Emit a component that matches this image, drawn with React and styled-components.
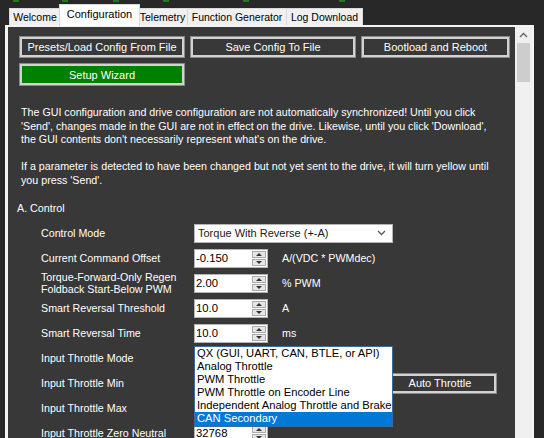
import React from 'react';
import styled, { createGlobalStyle } from 'styled-components';

const GlobalStyle = createGlobalStyle`
  html, body {
    margin: 0;
    padding: 0;
    background: #282828;
    overflow: hidden;
  }
  body {
    font-family: "Liberation Sans", Arial, sans-serif;
    font-size: 10.7px;
  }
  * { box-sizing: border-box; }
`;

const Window = styled.div`
  width: 544px;
  height: 438px;
  display: flex;
  flex-direction: column;
  overflow: hidden;
`;

const LedStrip = styled.div`
  height: 4px;
  display: flex;
  align-items: flex-start;
`;

const Led = styled.span`
  width: 6px;
  height: 2px;
  background: #1d7a1d;
  margin-left: ${p => p.$gap}px;
`;

const TabBar = styled.div`
  height: 21px;
  display: flex;
  align-items: flex-end;
  padding-left: 9px;
`;

const Tab = styled.div`
  position: relative;
  width: ${p => p.$w}px;
  height: ${p => (p.$active ? 22 : 17)}px;
  margin: ${p => (p.$active ? '0 -2px -1px -2px' : '0')};
  padding-top: ${p => (p.$active ? 3 : 2)}px;
  text-align: center;
  background: ${p => (p.$active ? '#ffffff' : '#f0f0f0')};
  border: 1px solid #d9d9d9;
  border-bottom: none;
  border-left: ${p => (p.$active ? '1px solid #d9d9d9' : 'none')};
  z-index: ${p => (p.$active ? 2 : 1)};
  color: #000;
  font-size: ${p => (p.$active ? 11 : 10.5)}px;
  white-space: nowrap;
  &:first-child {
    border-left: 1px solid #d9d9d9;
  }
`;

const Page = styled.div`
  flex: 1;
  min-height: 0;
  margin: 0 10px 0 5px;
  border: 3px solid #f4f4f4;
  border-top-width: 2px;
  border-right-width: 2px;
  border-bottom: none;
  display: flex;
`;

const Content = styled.div`
  flex: 1;
  background: #383838;
  color: #ffffff;
  padding: 10px 0 0 12px;
  overflow: hidden;
`;

const ButtonRow = styled.div`
  display: flex;
  gap: 7px;
`;

const Button = styled.button`
  width: ${p => p.$w || 164}px;
  height: ${p => p.$h || 20}px;
  background: ${p => (p.$green ? '#008000' : '#383838')};
  border: 2px solid #d2d2d2;
  box-shadow: 0 0 0 1px #8a8a8a;
  color: #ffffff;
  font-family: "Liberation Sans", Arial, sans-serif;
  font-size: 11px;
  padding: 0;
  margin-left: ${p => p.$ml || 0}px;
  white-space: nowrap;
  cursor: pointer;
`;

const WizardRow = styled.div`
  margin-top: 7px;
`;

const Notice = styled.div`
  margin-top: 21px;
  padding-left: 1px;
  line-height: 13.5px;
  p {
    margin: 0 0 13.5px 0;
  }
`;

const SectionTitle = styled.div`
  margin: 13px 0 6px -3px;
  line-height: 14px;
`;

const Row = styled.div`
  display: grid;
  grid-template-columns: 153px auto 1fr;
  align-items: center;
  height: 25px;
  padding-left: 21px;
`;

const Label = styled.div`
  line-height: 12px;
`;

const Unit = styled.div`
  margin-left: 14px;
  white-space: nowrap;
`;

const Combo = styled.div`
  width: 199px;
  height: 19px;
  background: #ffffff;
  border: 1px solid #b4b4b4;
  color: #1a1a1a;
  display: flex;
  align-items: center;
  justify-content: space-between;
  padding: 0 6px 0 3px;
  font-size: 11px;
`;

const SpinBox = styled.div`
  width: 74px;
  height: 19px;
  background: #ffffff;
  border: 1px solid #b4b4b4;
  display: flex;
  color: #000;
`;

const SpinValue = styled.div`
  flex: 1;
  padding-left: 1px;
  line-height: 16px;
  font-size: 11.3px;
`;

const SpinButtons = styled.div`
  width: 15px;
  display: flex;
  flex-direction: column;
  gap: 1px;
  padding: 1px 1px 1px 0;
`;

const SpinHalf = styled.div`
  flex: 1;
  background: #e5e5e5;
  border: 1px solid #acacac;
  display: flex;
  align-items: center;
  justify-content: center;
  &::after {
    content: '';
    border-left: 3px solid transparent;
    border-right: 3px solid transparent;
    ${p => (p.$down ? 'border-top: 3px solid #333;' : 'border-bottom: 3px solid #333;')}
  }
`;

const ListAnchor = styled.div`
  position: relative;
`;

const DropList = styled.div`
  position: absolute;
  top: -3px;
  left: 0;
  width: 199px;
  background: #ffffff;
  border: 1px solid #3d6a9c;
  z-index: 5;
`;

const DropItem = styled.div`
  height: 13.2px;
  line-height: 13.2px;
  padding-left: 2px;
  font-size: 11.2px;
  white-space: nowrap;
  overflow: hidden;
  background: ${p => (p.$selected ? '#0078d7' : '#ffffff')};
  color: ${p => (p.$selected ? '#ffffff' : '#000000')};
`;

const ScrollBar = styled.div`
  width: 17px;
  background: #f0f0f0;
  display: flex;
  flex-direction: column;
`;

const ScrollArrow = styled.div`
  height: 16px;
  display: flex;
  align-items: center;
  justify-content: center;
`;

const ScrollThumb = styled.div`
  height: 39px;
  margin: 0 2px;
  background: #cdcdcd;
`;

const Chevron = ({ up }) => (
  <svg width="9" height="6" viewBox="0 0 9 6">
    <path
      d={up ? 'M1 5 L4.5 1.5 L8 5' : 'M1 1 L4.5 4.5 L8 1'}
      fill="none"
      stroke={up ? '#606060' : '#555'}
      strokeWidth="1.3"
    />
  </svg>
);

// value is left out for the boxes the open list covers
const Spin = ({ value }) => (
  <SpinBox>
    <SpinValue>{value}</SpinValue>
    <SpinButtons>
      <SpinHalf />
      <SpinHalf $down />
    </SpinButtons>
  </SpinBox>
);

const throttleModes = [
  'QX (GUI, UART, CAN, BTLE, or API)',
  'Analog Throttle',
  'PWM Throttle',
  'PWM Throttle on Encoder Line',
  'Independent Analog Throttle and Brake',
  'CAN Secondary',
];

export default function App() {
  return (
    <Window>
      <GlobalStyle />
      <LedStrip>
        <Led $gap={13} />
        <Led $gap={43} />
        <Led $gap={45} />
        <Led $gap={44} />
        <Led $gap={74} />
        <Led $gap={90} />
      </LedStrip>
      <TabBar>
        <Tab $w={52}>Welcome</Tab>
        <Tab $w={81} $active>Configuration</Tab>
        <Tab $w={50}>Telemetry</Tab>
        <Tab $w={99}>Function Generator</Tab>
        <Tab $w={76}>Log Download</Tab>
      </TabBar>
      <Page>
        <Content>
          <ButtonRow>
            <Button>Presets/Load Config From File</Button>
            <Button>Save Config To File</Button>
            <Button $w={147}>Bootload and Reboot</Button>
          </ButtonRow>
          <WizardRow>
            <Button $green $h={21}>Setup Wizard</Button>
          </WizardRow>
          <Notice>
            <p>
              The GUI configuration and drive configuration are not automatically synchronized! Until you click
              <br />
              'Send', changes made in the GUI are not in effect on the drive. Likewise, until you click 'Download',
              <br />
              the GUI contents don't necessarily represent what's on the drive.
            </p>
            <p>
              If a parameter is detected to have been changed but not yet sent to the drive, it will turn yellow until
              <br />
              you press 'Send'.
            </p>
          </Notice>
          <SectionTitle>A. Control</SectionTitle>
          <Row>
            <Label>Control Mode</Label>
            <Combo>
              <span>Torque With Reverse (+-A)</span>
              <Chevron />
            </Combo>
          </Row>
          <Row>
            <Label>Current Command Offset</Label>
            <Spin value="-0.150" />
            <Unit>A/(VDC * PWMdec)</Unit>
          </Row>
          <Row>
            <Label>
              Torque-Forward-Only Regen
              <br />
              Foldback Start-Below PWM
            </Label>
            <Spin value="2.00" />
            <Unit>% PWM</Unit>
          </Row>
          <Row>
            <Label>Smart Reversal Threshold</Label>
            <Spin value="10.0" />
            <Unit>A</Unit>
          </Row>
          <Row>
            <Label>Smart Reversal Time</Label>
            <Spin value="10.0" />
            <Unit>ms</Unit>
          </Row>
          <Row>
            <Label>Input Throttle Mode</Label>
            <ListAnchor>
              <Combo>
                <span />
                <Chevron />
              </Combo>
              <DropList>
                {throttleModes.map(m => (
                  <DropItem key={m} $selected={m === 'CAN Secondary'}>
                    {m}
                  </DropItem>
                ))}
              </DropList>
            </ListAnchor>
          </Row>
          <Row>
            <Label>Input Throttle Min</Label>
            <Spin />
            <div>
              <Button $w={112} $h={19} $ml={116}>Auto Throttle</Button>
            </div>
          </Row>
          <Row>
            <Label>Input Throttle Max</Label>
            <Spin />
          </Row>
          <Row>
            <Label>Input Throttle Zero Neutral</Label>
            <Spin value="32768" />
          </Row>
        </Content>
        <ScrollBar>
          <ScrollArrow>
            <Chevron up />
          </ScrollArrow>
          <ScrollThumb />
        </ScrollBar>
      </Page>
    </Window>
  );
}
